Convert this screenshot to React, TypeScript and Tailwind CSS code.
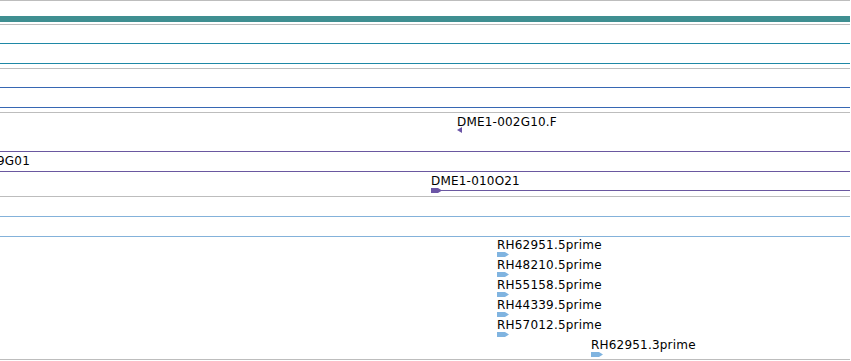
const rh = [
  { label: "RH62951.5prime", x: 497, row: 0 },
  { label: "RH48210.5prime", x: 497, row: 1 },
  { label: "RH55158.5prime", x: 497, row: 2 },
  { label: "RH44339.5prime", x: 497, row: 3 },
  { label: "RH57012.5prime", x: 497, row: 4 },
  { label: "RH62951.3prime", x: 591, row: 5 },
];

function Rule({ color }: { color: string }) {
  return <div className={`h-px w-full shrink-0 ${color}`} />;
}

function ArrowRight({ fill, w = 12 }: { fill: string; w?: number }) {
  return (
    <svg width={w} height="5" viewBox={`0 0 ${w} 5`} className="block">
      <polygon points={`0,0 ${w - 4},0 ${w},2.5 ${w - 4},5 0,5`} fill={fill} />
    </svg>
  );
}

export default function App() {
  return (
    <div className="w-[851px] h-[361px] overflow-hidden bg-white text-[12px] leading-[14px] tracking-[0.2px] text-black" style={{ fontFamily: '"DejaVu Sans", sans-serif' }}>
      <div className="w-[850px] flex flex-col">
        <Rule color="bg-[#bdbdbd]" />
        <div className="h-[15px]" />
        <div className="h-[6px] bg-[#3f8f91]" />
        <div className="h-[2px]" />
        <Rule color="bg-[#bdbdbd]" />
        <div className="h-[18px]" />
        <Rule color="bg-[#1f88a6]" />
        <div className="h-[19px]" />
        <Rule color="bg-[#1f88a6]" />
        <div className="h-[4px]" />
        <Rule color="bg-[#bdbdbd]" />
        <div className="h-[18px]" />
        <Rule color="bg-[#3767b3]" />
        <div className="h-[19px]" />
        <Rule color="bg-[#3767b3]" />
        <div className="h-[4px]" />
        <Rule color="bg-[#bdbdbd]" />

        {/* DME1-002G10.F */}
        <div className="relative h-[38px]">
          <div className="absolute left-[457px] top-[2px] whitespace-nowrap">DME1-002G10.F</div>
          <svg width="5" height="6" viewBox="0 0 5 6" className="absolute left-[457px] top-[14px]">
            <polygon points="0,3 5,0 5,6" fill="#6b55a6" />
          </svg>
        </div>
        <Rule color="bg-[#6a58a0]" />
        <div className="relative h-[19px]">
          <div className="absolute left-[-3px] top-[2px] whitespace-nowrap">9G01</div>
        </div>
        <Rule color="bg-[#6a58a0]" />

        {/* DME1-010O21 */}
        <div className="relative h-[24px]">
          <div className="absolute left-[431px] top-[2px] whitespace-nowrap">DME1-010O21</div>
          <div className="absolute left-[431px] right-0 top-[18px] h-px bg-[#6a58a0]" />
          <div className="absolute left-[431px] top-[16px]">
            <ArrowRight fill="#6b55a6" w={11} />
          </div>
        </div>
        <Rule color="bg-[#bdbdbd]" />
        <div className="h-[19px]" />
        <Rule color="bg-[#84b2da]" />
        <div className="h-[19px]" />
        <Rule color="bg-[#84b2da]" />

        {/* RH features */}
        <div className="relative h-[122px]">
          {rh.map((f) => (
            <div key={f.label + f.row}>
              <div className="absolute whitespace-nowrap" style={{ left: f.x, top: 1 + f.row * 20 }}>
                {f.label}
              </div>
              <div className="absolute" style={{ left: f.x, top: 15 + f.row * 20 }}>
                <ArrowRight fill="#80b4e0" />
              </div>
            </div>
          ))}
        </div>
        <Rule color="bg-[#bdbdbd]" />
      </div>
    </div>
  );
}
